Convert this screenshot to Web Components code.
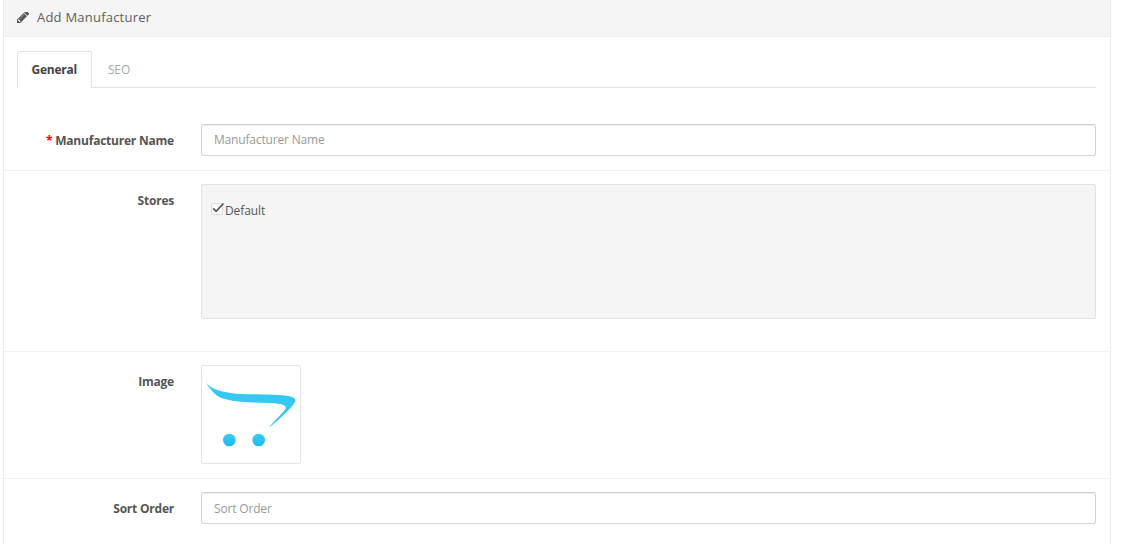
<!DOCTYPE html>
<html><head><meta charset="utf-8">
<style>
html,body{margin:0;padding:0;background:#fff;height:544px;overflow:hidden}
body{font-family:"Open Sans",sans-serif;font-size:12px;color:#666}
</style></head><body>
<template id="t-panel"><style>
:host{display:block;margin-left:3px;width:1108px;box-sizing:border-box;border:1px solid #e8e8e8;border-top:0;border-bottom:0;height:544px;overflow:hidden}
.h{height:37px;box-sizing:border-box;background:#f5f5f5;border-bottom:1px solid #eee;display:flex;align-items:center;gap:8px;padding:0 0 2px 13px;font-size:13px;letter-spacing:.22px;color:#5e5e5e}
svg{width:12px;height:12px;display:block;fill:#555;margin-top:1px}
.b{padding:14px 14px 0 13px}
</style><div class="h"><svg viewBox="0 160 1515 1504"><path d="M363 1408l91-91-235-235-91 91v107h128v128h107zm523-928q0-22-22-22-10 0-17 7l-542 542q-7 7-7 17 0 22 22 22 10 0 17-7l542-542q7-7 7-17zm-54-192l416 416-832 832h-416v-416zm683 96q0 53-37 90l-166 166-416-416 166-165q36-38 90-38 53 0 91 38l235 234q37 39 37 91z"/></svg><span><slot name="title"></slot></span></div><div class="b"><slot></slot></div></template>

<template id="t-tabs"><style>
:host{display:flex;height:37px;box-sizing:border-box;border-bottom:1px solid #e3e3e3;font-size:12px}
</style><slot></slot></template>

<template id="t-tab"><style>
:host{display:block;box-sizing:border-box;height:37px;line-height:36px;padding:0 15px;color:#a8a8a8;border:1px solid transparent;border-bottom:0;letter-spacing:-.1px}
:host([active]){color:#444;font-weight:700;background:#fff;border-color:#e3e3e3;border-radius:2px 2px 0 0;padding:0 14px 0 13.500px;letter-spacing:-.25px}
</style><slot></slot></template>

<template id="t-row"><style>
:host{display:grid;grid-template-columns:157px 1fr;column-gap:27px;margin:0 -14px 0 -13px;padding:13px 14px 14px 13px;border-bottom:1px solid #f2f2f2}
:host([last]){border-bottom:0}
.l{font-weight:700;color:#555;text-align:right;line-height:17px;padding-top:8px;letter-spacing:-.22px}
.c{min-width:0}
</style><div class="l"><slot name="req"></slot><slot name="label"></slot></div><div class="c"><slot></slot></div></template>

<template id="t-input"><style>
:host{display:block}
input{display:block;width:100%;height:32px;box-sizing:border-box;border:1px solid #d4d4d4;border-top-color:#cfcfcf;border-radius:3px;padding:0 12px 1px;font:12px "Open Sans",sans-serif;letter-spacing:-.17px;color:#555;outline:0;box-shadow:inset 0 1px 1px rgba(0,0,0,.06)}
:host([low]) input{padding-bottom:0}
input::placeholder{color:#999;opacity:1}
</style><input></template>

<template id="t-well"><style>
:host{display:block;height:135px;box-sizing:border-box;background:#f5f5f5;border:1px solid #e2e2e2;border-radius:2px;padding:17px 9px 0;}
</style><slot></slot></template>

<template id="t-check"><style>
:host{display:flex;align-items:flex-start;color:#555;font-size:12px;line-height:17px;letter-spacing:-.1px}
svg{width:14px;height:15px;display:block;flex:none;margin-right:0}
</style><svg viewBox="0 0 14 15"><rect x=".5" y="1.500" width="11" height="11" rx="1.500" fill="#fbfbfb" stroke="#dcdcdc"/><path d="M2.200 6.300l2.900 3L12.500 1.500" fill="none" stroke="#555" stroke-width="1.700"/></svg><span><slot></slot></span></template>

<template id="t-thumb"><style>
:host{display:block;width:100px;height:99px;box-sizing:border-box;border:1px solid #e3e3e3;border-radius:2px;background:#fff;overflow:hidden}
svg{display:block;width:98px;height:97px}
</style><svg viewBox="36 33 294 291"><defs><filter id="s" x="-5%" y="-5%" width="110%" height="110%"><feGaussianBlur stdDeviation="1.200"/></filter><linearGradient id="g" x1="0" y1="0" x2="0" y2="1"><stop offset="0" stop-color="#3ccdf4"/><stop offset="1" stop-color="#1fb8f0"/></linearGradient></defs><g filter="url(#s)"><path fill="#35c8f2" d="M47 82C60 98 80 110 139 116C180 119 260 116 299 124C312 127 319 133 315 141C300 165 262 198 237 218C252 198 282 172 287 160C289 150 275 146 239 144C190 142 135 143 96 130C74 121 60 102 47 82Z"/><circle cx="118" cy="255" r="19" fill="url(#g)"/><circle cx="206" cy="255" r="19" fill="url(#g)"/></g></svg></template>

<script>
for (const [n,t] of [['x-panel','t-panel'],['x-tabs','t-tabs'],['x-tab','t-tab'],['x-row','t-row'],['x-input','t-input'],['x-well','t-well'],['x-check','t-check'],['x-thumb','t-thumb']]) {
  customElements.define(n, class extends HTMLElement {
    constructor(){super();this.attachShadow({mode:'open'}).appendChild(document.getElementById(t).content.cloneNode(true));}
    connectedCallback(){const i=this.shadowRoot.querySelector('input');if(i&&this.hasAttribute('placeholder'))i.placeholder=this.getAttribute('placeholder');}
  });
}
</script>
<x-panel>
  <span slot="title">Add Manufacturer</span>
  <x-tabs><x-tab active>General</x-tab><x-tab>SEO</x-tab></x-tabs>
  <div style="height:23px"></div>
  <x-row><span slot="req" style="color:#f00;font-weight:700">* </span><span slot="label">Manufacturer Name</span><x-input placeholder="Manufacturer Name"></x-input></x-row>
  <x-row><span slot="label">Stores</span><x-well><x-check>Default</x-check></x-well><div style="height:18px"></div></x-row>
  <x-row><span slot="label">Image</span><x-thumb></x-thumb></x-row>
  <x-row last><span slot="label">Sort Order</span><x-input low placeholder="Sort Order"></x-input></x-row>
</x-panel>
</body></html>
